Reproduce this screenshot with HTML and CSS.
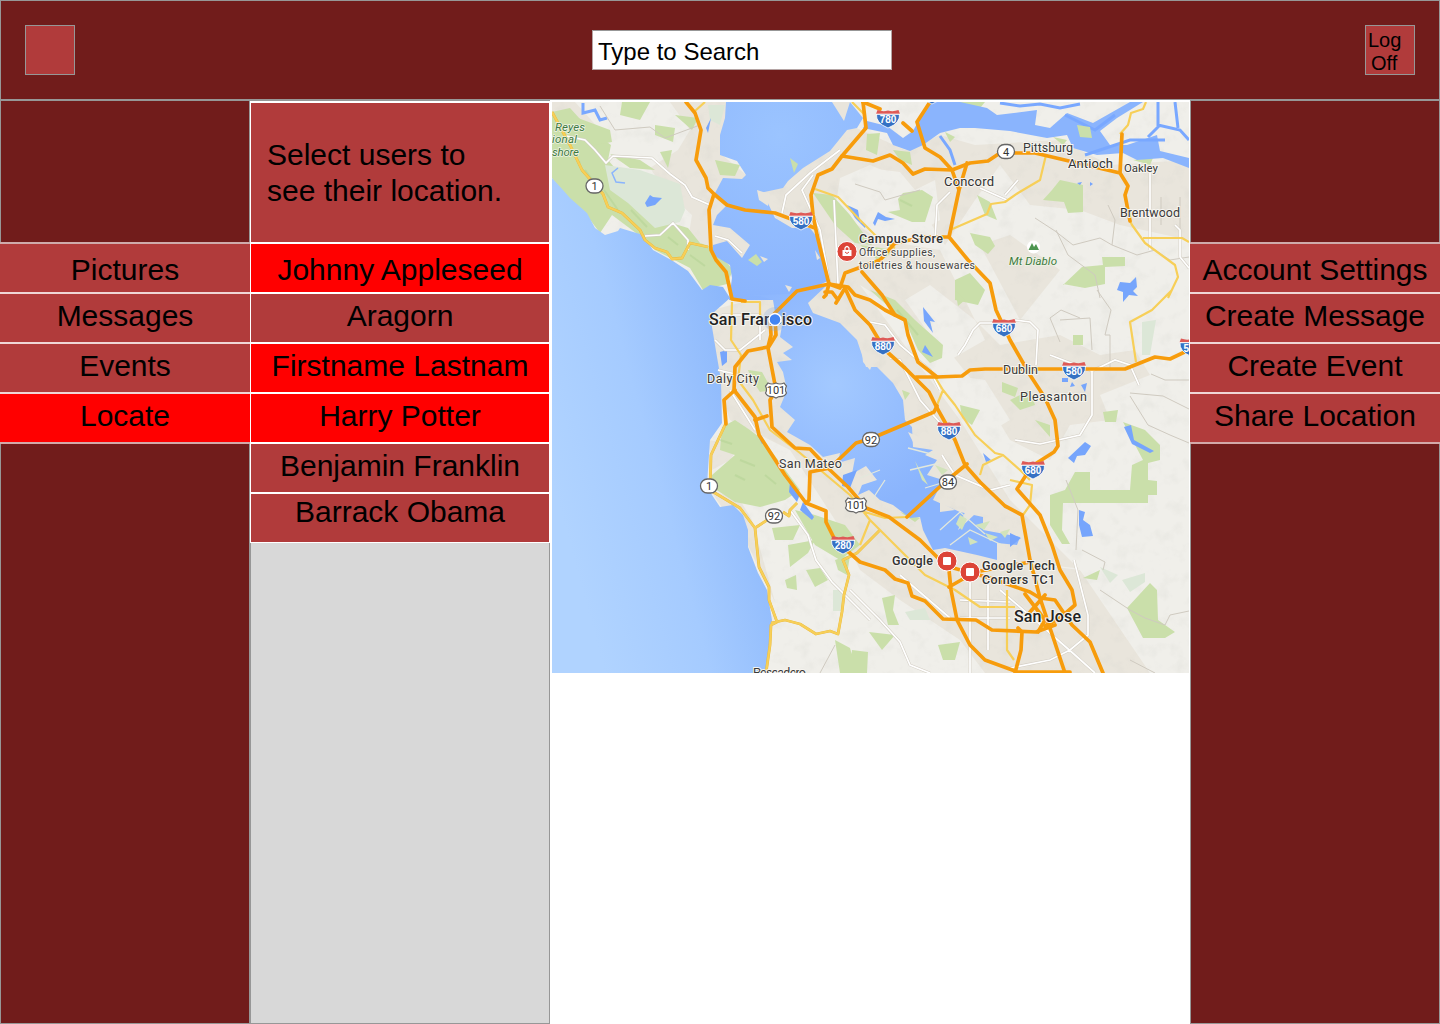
FILE: index.html
```html
<!DOCTYPE html>
<html lang="en">
<head>
<meta charset="utf-8">
<title>Locate</title>
<link rel="stylesheet" href="styles.css">
</head>
<body>
<header class="topbar">
  <button class="square" aria-label="Home"></button>
  <input class="search" type="text" value="Type to Search" aria-label="Search">
  <button class="square logoff"><span>Log</span><span class="off">Off</span></button>
</header>
<main class="columns">
  <nav class="panel side">
    <a class="row first">Pictures</a>
    <a class="row">Messages</a>
    <a class="row">Events</a>
    <a class="row active">Locate</a>
  </nav>
  <section class="panel users">
    <div class="card">
      <p class="prompt">Select users to<br>see their location.</p>
      <a class="row first active">Johnny Appleseed</a>
      <a class="row">Aragorn</a>
      <a class="row active">Firstname Lastnam</a>
      <a class="row active">Harry Potter</a>
      <a class="row">Benjamin Franklin</a>
      <a class="row last">Barrack Obama</a>
    </div>
  </section>
  <section class="map-area">
    <svg class="map" viewBox="552 102 637 571" width="637" height="571">
      <defs>
        <linearGradient id="sea" gradientUnits="userSpaceOnUse" x1="552" y1="480" x2="772" y2="420">
          <stop offset="0" stop-color="#b0d3ff"/><stop offset=".45" stop-color="#a5cbff"/><stop offset="1" stop-color="#89b5fb"/>
        </linearGradient>
        <radialGradient id="bay" gradientUnits="userSpaceOnUse" cx="835" cy="385" r="130">
          <stop offset="0" stop-color="#a3c9ff"/><stop offset="1" stop-color="#8ab4fd"/>
        </radialGradient>
        <radialGradient id="north" gradientUnits="userSpaceOnUse" cx="780" cy="135" r="170">
          <stop offset="0" stop-color="#9bc4ff"/><stop offset="1" stop-color="#8ab4fd"/>
        </radialGradient>
        <filter id="relief" x="0" y="0" width="100%" height="100%">
          <feTurbulence type="fractalNoise" baseFrequency=".07" numOctaves="3" seed="8"/>
          <feColorMatrix values="0 0 0 0 .6  0 0 0 0 .6  0 0 0 0 .56  1.6 0 0 0 -.8"/>
        </filter>
        <g id="interstate">
          <path d="M-11.500-5H11.500Q12.500 4 0 9Q-12.500 4-11.500-5Z" fill="#3571c4" stroke="#fff" stroke-width=".8"/>
          <path d="M-10.500-9Q-5-7 0-8.500Q5-7 10.500-9L12-5H-12Z" fill="#de5a57"/>
          <path d="M-12-4.800H12" stroke="#fff"/>
        </g>
        <rect id="oval" x="-8.500" y="-7" width="17" height="14" rx="7" fill="#fff" stroke="#666" stroke-width="1.300"/>
        <path id="us" d="M-8-7Q-4-5 0-7Q4-5 8-7L10.500-4Q8.500 0 10.500 3Q8.500 7 3 6.500L0 8L-3 6.500Q-8.500 7-10.500 3Q-8.500 0-10.500-4Z" fill="#fff" stroke="#666" stroke-width="1.200"/>
        <g id="pin"><circle r="10" fill="#dc4437" stroke="#fff" stroke-width="1"/></g>
      </defs>
      <rect x="552" y="102" width="637" height="571" fill="#f0efea"/>

      <!-- built-up areas -->
      <g fill="#e9e5dc">
        <path d="M670 102H735L722 155L750 178L720 190L756 250L735 262L712 252L688 240L692 215L665 190L650 168L678 150L690 130Z"/>
        <path d="M552 102H575L600 130L575 150L552 120Z"/>
        <path d="M760 190L800 165L850 125L905 150L940 135L975 145L1060 140L1110 165L1189 160V240L1120 225L1080 210L1030 205L1000 165L975 200L945 245L925 215L905 180L870 165L840 178L835 210L880 240L940 250L975 320L1000 345L1060 335L1100 355L1135 350L1150 375L1100 395L1110 420L1070 425L1050 460L1010 440L980 390L940 340L900 310L860 285L960 420L1010 500L1070 560L1110 600L1150 673H985L960 640L900 600L860 570L835 520L790 450L730 420L712 370L712 310L770 295L830 285L780 225Z"/>
        <path d="M708 440L740 445L730 460L712 470ZM710 490L740 500L752 520L775 602L764 580L748 545Z"/>
        <path d="M980 245L1010 235L1060 270L1020 320ZM1120 190H1189V210L1150 205Z"/>
      </g>
      <path fill="#f0efea" d="M848 190L868 168L900 172L915 190L935 180L940 220L905 240L875 235L850 210ZM905 300L930 285L975 320L985 340L950 360L930 335ZM1000 560L1189 580V673H1150L1080 570ZM950 375L985 380L1010 420L985 435Z"/>
      <rect x="552" y="102" width="637" height="571" filter="url(#relief)" opacity=".3"/>

      <!-- parks -->
      <g fill="#cadfaa">
        <path d="M552 112L570 108L590 130L611 145L608 160L625 180L645 205L668 222L688 228L700 243L715 248L733 270L727 284L703 290L690 268L655 250L640 236L612 215L600 233L585 213L565 196L552 178Z"/>
        <path d="M622 102H650L640 120L620 115ZM570 115L610 130L612 142L590 146ZM655 125L675 128L673 142L655 135ZM675 115L698 118L692 130ZM610 154L640 160L655 170L630 168ZM660 152L672 150L668 168ZM715 160L740 165L735 176L720 175ZM748 260L758 255L762 262L755 266Z"/>
        <path d="M790 158L800 165L795 174L790 170ZM867 134L880 133L877 155L866 150ZM893 150L910 152L912 165L900 160ZM813 193L832 195L850 215L872 245L855 243L835 225ZM898 199L903 193L922 190L933 197L925 222L912 222L888 212L900 210ZM860 245L895 250L880 262ZM945 132L955 137L950 142Z"/>
        <path d="M1043 200L1052 190L1060 180L1083 185L1083 212L1068 213L1064 202ZM1063 285L1082 267L1103 265L1102 257H1125V266L1105 267L1105 284L1085 288L1063 284ZM977 195L990 202L997 220L985 215ZM970 233L990 237L995 246L988 254L975 245ZM955 280L970 273L985 290L978 305L955 300ZM1073 125L1092 128L1080 137ZM1053 137L1067 140L1063 145ZM1133 160L1153 158L1150 165Z"/>
        <path d="M870 290L895 300L915 320L943 345L942 358L930 363L918 350L907 325L890 308ZM748 370L762 372L772 390L760 392L752 380ZM722 427L735 420L750 430L763 440L778 460L800 490L785 500L760 507L735 502L712 487L712 475L735 455L720 450Z"/>
        <path d="M1073 335H1083V345H1073ZM1010 400L1030 390L1035 405L1020 410ZM1035 420L1050 425L1050 437ZM1103 412L1118 410L1116 422L1105 422ZM1123 422L1145 430L1160 445V460L1148 463V480L1157 481V495H1148V503H1115L1063 503L1062 530L1070 544H1062L1050 525L1050 495L1065 490L1075 472H1090V490H1130L1132 465L1143 460ZM960 405L980 410L972 425L962 418ZM1002 382L1018 388L1015 397L1002 392ZM955 290L965 300L958 306Z"/>
        <path d="M772 528L800 525L793 540H775ZM788 545L815 540L808 553L790 567ZM806 570L820 568L828 580L815 587ZM795 510L815 515L845 525L860 545L840 560L815 545ZM785 580L796 575L797 590L787 588ZM835 560L850 555L847 575L838 570ZM835 640L850 648L857 673H840ZM852 650L868 652L867 673H850ZM882 598L895 595L893 610L899 625L888 625ZM938 645L960 642L955 660H943ZM869 632L895 635L882 650ZM552 673"/>
        <path d="M1127 608L1150 583L1157 590L1158 620L1175 632L1165 638L1143 638ZM1083 578L1100 570L1097 580ZM900 512L920 518L915 522ZM902 390L910 393L905 400ZM955 102H985L980 108Z"/>
      </g>
      <g fill="#dce7d7">
        <path d="M605 165L640 170L680 184L685 210L680 222L655 228L628 203L610 190ZM1122 580L1145 573L1145 582L1130 592ZM1142 322L1156 320L1150 355H1142ZM833 590H842V611H833ZM708 105H725L720 125L710 120ZM905 612L925 608L930 620L910 620ZM1100 567L1118 575L1110 583Z"/>
      </g>
      <g fill="none" stroke="#b6d496" stroke-width="2" opacity=".6"><path d="M570 150L580 163M585 170L594 182M604 190L618 210M631 210L647 227M668 237L678 245M690 255L705 266M720 440L732 444M740 460L755 466M735 475L745 480M765 475L776 484M900 200L912 206M897 310L918 335"/></g>

      <!-- water -->
      <path fill="url(#sea)" d="M552 178L563 190L570 198L587 213L595 228L605 235L618 231L620 228L643 235L653 250L673 261L688 271L702 290L710 285L723 287L730 298L713 313L712 327L717 357L721 380L722 423L710 440L707 485L712 495L720 507L733 505L743 515L748 530V547L758 573L767 590L772 620L770 640L766 673H552Z"/>
      <path fill="url(#north)" d="M726 102L725 118L720 135V155L737 161L746 175L742 179L723 178L715 193L727 205L717 215L713 225L730 228L750 245L742 258L727 241L713 245V255L730 265L732 278L729 300H775L790 298L828 281L823 258L820 241L810 228H792L775 218L767 201L760 193L783 188L788 181L803 168L830 151L847 130L857 128L863 118L850 102Z"/>
      <path fill="url(#bay)" d="M728 296L760 296L773 300L775 312L783 320L780 337L793 347L783 353L792 360L777 362L783 372L787 390L780 407L795 420L787 432L810 445L823 457L840 453L838 463L855 458L852 474L866 466L877 480L862 485L858 495L869 490L880 500L893 505L910 518L920 517L923 530L933 550L945 548L977 555L997 560V543L1017 545L1020 537L983 530V517L960 512L933 500L943 480L927 475L937 460L925 455L933 450L913 447L912 427L905 420L903 400L893 383L877 367L866 367L857 340L840 323L813 313L808 303L826 286L790 294Z"/>
      <path fill="#8ab4fd" d="M863 128L887 133L893 145L910 151L923 145L940 133L960 128H975L1010 131L1047 138L1067 135L1073 148L1097 155L1123 153L1137 160L1163 158L1189 168V158L1160 151L1157 135L1127 145H1110L1100 131L1117 118L1143 102H1130L1093 123L1067 113L1050 128L1035 125L1037 110L997 115L987 108L960 102H930L920 118L913 131L903 138L887 126L867 121Z"/>
      <g fill="none" stroke="#79a8ff" stroke-width="3"><path d="M1000 103L1020 106L1040 104L1060 108L1080 104M1065 115L1095 130L1115 115M1158 102V125L1180 130L1189 140M1160 125L1148 137M1175 102L1178 128M1085 155L1130 140L1165 140M940 136L950 150L955 165M583 103V113L595 110L600 120L607 118"/></g>
      <g fill="#e9e5dc"><path d="M760 256L768 259L764 262ZM832 102H850L844 121ZM757 190L770 194L768 206L759 200ZM815 250L820 258L817 260ZM785 285L792 287L789 292ZM862 352L875 358L870 370L863 362Z"/></g>
      <g fill="#cadfaa"><path d="M1077 125L1090 127L1092 138L1080 137ZM748 260L756 254L762 262L757 266ZM790 158L798 164L794 173Z"/></g>
      <g fill="#76a5fc">
        <path d="M847 205L858 210L860 222L866 225L865 228L855 218ZM873 223L878 212L886 217L895 219L885 221L878 219L875 226ZM1120 282L1130 283L1136 277L1137 287L1133 291L1138 296L1129 295L1123 302L1123 292L1117 290ZM1124 427L1131 425L1134 440L1154 451L1150 453L1132 444ZM1068 458L1085 442L1091 446L1085 455L1077 456L1074 463ZM1079 510L1085 512L1083 520L1090 525L1093 536L1082 537L1079 525ZM1062 378H1068V382H1062ZM1072 382L1075 386L1070 387ZM1081 385L1087 383L1085 392ZM645 203L650 195L653 197L662 198L655 205L647 207ZM720 352L727 350V362L722 366ZM757 434L765 442L762 444ZM790 482L800 494L797 502L789 492ZM803 502L814 517L812 520L800 510ZM923 307L935 322L930 321L933 333L924 321ZM925 345L933 357L922 352ZM983 453L991 460L986 462ZM843 475L857 470L850 488L842 486ZM1010 533L1021 538L1010 547ZM706 128L711 118L708 133ZM1077 183L1082 182L1080 185ZM1090 182L1093 184L1090 186Z"/>
        <path d="M618 168L612 173L616 182L625 183" fill="none" stroke="#8ab4fd" stroke-width="1.500"/>
      </g>
      <!-- salt ponds -->
      <g fill="#e9e5dc"><path d="M908 432L925 440L915 446ZM940 502L955 510L940 512ZM965 490L974 515L958 530L967 507Z"/></g>
      <g fill="#d2e3bb"><path d="M960 515L967 519L962 530L956 524ZM975 525L990 521L984 530ZM985 533L998 537L990 541ZM968 537L978 542L970 545ZM1000 532L1010 529L1005 538ZM915 461L928 485L922 480ZM935 465L948 470L942 475Z"/></g>
      <g fill="none" stroke="#e3e8dc" stroke-width="1.300"><path d="M908 448L935 455M910 470L940 463M925 488L945 482M940 530L960 512L985 534M950 545L970 530L1002 545M860 478L880 470M872 500L885 480"/></g>

      <!-- minor roads -->
      <path fill="none" stroke="#cfcac0" stroke-width="1" d="M1035 218L1055 231L1073 245L1100 238L1112 245L1137 255L1155 250L1170 260L1189 257M1112 245L1115 220L1108 205M1056 230L1068 255L1095 275L1100 298M855 184L880 192L885 200L920 190M1097 290L1111 310L1105 335L1110 335V368M1060 320L1090 318L1092 350M1060 342L1050 318L1061 310L1080 318M1130 393L1163 396L1189 409M1130 396L1148 425L1170 435L1189 443M1151 374L1165 380H1189M1082 550L1105 562L1103 570M1100 590L1130 610L1145 618L1165 625L1170 615L1189 611M600 106L615 130L650 127L665 138L700 125M1161 197V225M1180 197V232M1130 660L1155 673M1066 480L1078 510L1076 550M820 673L835 645"/>
      <path fill="none" stroke="#d3cec4" stroke-width="2.800" d="M566 136L585 140L595 150L606 163L613 156L652 158L670 174L685 185L692 197L710 205M645 236L660 235L673 223L688 240V250M715 236L728 240L742 253M782 213L786 195L810 173L840 150M813 175L802 190L820 230L830 285M834 200L838 284M870 322L885 325L900 345L930 370L940 390M890 358L900 360L920 400L955 440M958 355L965 345L973 330L980 323H995M1015 320L1030 322L1038 330L1036 365M1050 355L1092 371L1115 360L1130 365L1139 385M1092 371V415L1080 435L1040 444L1015 440M790 510L808 535L816 560L832 582L850 600L870 620M850 590L880 620L900 642L910 665L930 673M970 575V673M988 580V650M960 600L1010 602M960 618H1010M900 575L950 618M942 455L945 460L955 475L990 490L1010 485M1000 590L1035 620L1075 655L1095 673M1074 560L1088 615V635L1070 650L1050 660L1010 668M722 315H760L760 340M715 340L725 350H740L765 330M718 370L740 375M730 390L755 430M1018 180L1005 195M980 188L1007 200M935 240L937 205L950 192M1150 173V250M1175 225L1180 230V257L1189 268"/>
      <path fill="none" stroke="#fff" stroke-width="1.700" d="M566 136L585 140L595 150L606 163L613 156L652 158L670 174L685 185L692 197L710 205M645 236L660 235L673 223L688 240V250M715 236L728 240L742 253M782 213L786 195L810 173L840 150M813 175L802 190L820 230L830 285M834 200L838 284M870 322L885 325L900 345L930 370L940 390M890 358L900 360L920 400L955 440M958 355L965 345L973 330L980 323H995M1015 320L1030 322L1038 330L1036 365M1050 355L1092 371L1115 360L1130 365L1139 385M1092 371V415L1080 435L1040 444L1015 440M790 510L808 535L816 560L832 582L850 600L870 620M850 590L880 620L900 642L910 665L930 673M970 575V673M988 580V650M960 600L1010 602M960 618H1010M900 575L950 618M942 455L945 460L955 475L990 490L1010 485M1000 590L1035 620L1075 655L1095 673M1074 560L1088 615V635L1070 650L1050 660L1010 668M722 315H760L760 340M715 340L725 350H740L765 330M718 370L740 375M730 390L755 430M1018 180L1005 195M980 188L1007 200M935 240L937 205L950 192M1150 173V250M1175 225L1180 230V257L1189 268"/>

      <!-- arterial roads -->
      <path fill="none" stroke="#e8b73a" stroke-width="2.800" stroke-linejoin="round" d="M552 112L570 145L582 170L603 194L608 207L622 213L640 230L645 240L655 248L667 252L672 259L682 258L690 243L708 247M726 423L711 455L710 490L740 508L755 528L759 567L769 587V600L777 622L771 625L770 645L766 673M771 623L785 620L800 624L816 634L830 631L838 634L842 612L844 595L849 575L843 560L857 553L880 530M755 528L775 515M783 512L789 516L790 510L797 503"/>
      <path fill="none" stroke="#f7cf58" stroke-width="2.200" stroke-linejoin="round" d="M552 112L570 145L582 170L603 194L608 207L622 213L640 230L645 240L655 248L667 252L672 259L682 258L690 243L708 247M726 423L711 455L710 490L740 508L755 528L759 567L769 587V600L777 622L771 625L770 645L766 673M771 623L785 620L800 624L816 634L830 631L838 634L842 612L844 595L849 575L843 560L857 553L880 530M755 528L775 515M783 512L789 516L790 510L797 503M732 302L731 340L741 355L738 380L753 400L770 430L800 453L850 495L870 520L895 545L925 575L955 590L980 607H1015M815 189L838 197L860 220L880 240L895 248M950 230L987 214L991 204L1005 202L1018 193L1040 180L1046 155M1146 102L1143 109L1131 113L1128 125L1120 134M1130 221L1132 225L1145 243L1175 265L1178 277L1168 298M1143 238H1182L1189 242M1172 290L1152 310L1130 322L1136 362M935 377L943 390L955 405L975 435L995 453L1003 455L1020 470L1030 480M980 475L983 465L1003 455M943 390L937 405M858 510L885 518L907 517M870 520L860 545M1007 590V650L1014 660M1010 480L1032 485L1030 505L1023 515M1003 578L1023 580M852 102L865 115M695 111L705 102M741 302H760V320"/>

      <!-- freeways -->
      <g fill="none" stroke="#f79c0c" stroke-width="3.700" stroke-linejoin="round" stroke-linecap="round">
        <path d="M686 102L695 113L701 130L696 160L706 178L708 188L714 194L709 210L711 250L716 260L726 272L732 299L745 301M714 194L727 205L745 210L775 213L815 228"/>
        <path d="M863 102L866 128L842 156L832 169L818 175L811 195L813 215L817 235L829 284L797 291L770 318L771 335L768 347L748 351L735 367L734 390L755 417L759 435L785 475L806 503L826 511V522L835 540L860 562L885 570L895 579L908 583L912 596L925 601L943 619L976 620L992 630L1036 632L1055 625"/>
        <path d="M863 102L880 109M930 102L917 122L925 148L940 157L952 170M903 123L912 131M917 122L921 135"/>
        <path d="M842 156L873 161L890 155L903 163L913 174L925 169L952 170L970 163L988 161L1000 153L1035 153L1120 173L1122 134M1120 173L1128 186L1125 195L1130 221M967 163L959 190L949 237H925L895 243L880 260L845 273L840 288L829 284M952 170L959 190"/>
        <path d="M949 237L968 260L990 283L996 310L1010 340L1030 375L1045 398L1055 420L1058 446L1054 452L1032 466L1017 489L1040 515L1052 545L1060 570L1072 590L1075 605L1060 618L1045 626"/>
        <path d="M829 284L848 287L855 295L870 300L885 310L905 320L908 335L918 362L937 377L962 376L970 370L985 369H1125L1155 357L1170 359L1189 350"/>
        <path d="M862 272L882 295L895 315M829 284L826 295L824 297M836 303L845 288L855 310L870 325L885 350L905 368L929 392L937 408L955 440L965 465L980 482L1005 506L1022 515L1030 560L1040 598L1065 673M838 300L832 292L825 292M916 377L937 377"/>
        <path d="M775 318L776 335L768 348L776 390L770 400L772 427L795 448L810 449L830 470L848 487L866 508L889 517L920 540L946 566L990 578L1030 592L1040 598L1055 600L1072 625L1090 642L1103 673"/>
        <path d="M735 390L724 400L726 424M755 420L767 416M810 472L809 500L806 503M810 472L830 468L856 443L870 439L934 412L937 406M907 517L945 482L967 464M949 570L951 590L957 620L970 645L985 660L1015 671M949 587L975 572L1030 562M1018 628L1022 632L1021 650L1015 673M1025 594L1045 620L1038 632M1045 595L1030 612M1015 672H1070"/>
      </g>

      <!-- route shields -->
      <g class="shield-text">
        <g transform="translate(888 119)"><use href="#interstate"/><text y="4">780</text></g>
        <g transform="translate(801 221)"><use href="#interstate"/><text y="4">580</text></g>
        <g transform="translate(883 346)"><use href="#interstate"/><text y="4">880</text></g>
        <g transform="translate(1004 328)"><use href="#interstate"/><text y="4">680</text></g>
        <g transform="translate(1074 371)"><use href="#interstate"/><text y="4">580</text></g>
        <g transform="translate(949 431)"><use href="#interstate"/><text y="4">880</text></g>
        <g transform="translate(1033 470)"><use href="#interstate"/><text y="4">680</text></g>
        <g transform="translate(843 545)"><use href="#interstate"/><text y="4">280</text></g>
        <g transform="translate(1191.500 347.500)"><use href="#interstate"/><text x="-8" y="4" style="text-anchor:start">5</text></g>
        <g transform="translate(932 95)"><use href="#interstate"/></g>
      </g>
      <g class="route-text">
        <g transform="translate(594.500 186)"><use href="#oval"/><text y="4">1</text></g>
        <g transform="translate(1006 151.500)"><use href="#oval"/><text y="4">4</text></g>
        <g transform="translate(709 486)"><use href="#oval"/><text y="4">1</text></g>
        <g transform="translate(774 516)"><use href="#oval"/><text y="4">92</text></g>
        <g transform="translate(871 439.500)"><use href="#oval"/><text y="4">92</text></g>
        <g transform="translate(948 482)"><use href="#oval"/><text y="4">84</text></g>
        <g transform="translate(776 390)"><use href="#us"/><text y="4">101</text></g>
        <g transform="translate(856 505)"><use href="#us"/><text y="4">101</text></g>
      </g>

      <!-- place names -->
      <g class="park-name">
        <text x="555" y="131" textLength="30">Reyes</text><text x="552" y="143" textLength="25">ional</text><text x="552" y="156" textLength="27">shore</text>
        <text x="1009" y="265" textLength="48">Mt Diablo</text>
      </g>
      <g class="town">
        <text x="1023" y="152" textLength="50">Pittsburg</text>
        <text class="mid" x="1068" y="168" textLength="45">Antioch</text>
        <text class="small" x="1124" y="172" textLength="34">Oakley</text>
        <text class="mid" x="944" y="186" textLength="50">Concord</text>
        <text x="1120" y="217" textLength="60">Brentwood</text>
        <text x="707" y="383" textLength="52">Daly City</text>
        <text x="1003" y="374" textLength="35">Dublin</text>
        <text x="1020" y="401" textLength="67">Pleasanton</text>
        <text x="779" y="468" textLength="63">San Mateo</text>
        <text x="753" y="677" textLength="53">Pescadero</text>
      </g>
      <g class="city"><text x="709" y="325" textLength="103">San Francisco</text><text x="1014" y="622" textLength="67">San Jose</text></g>
      <g class="poi">
        <text x="859" y="243" textLength="84">Campus Store</text>
        <text x="892" y="565" textLength="41">Google</text>
        <text x="982" y="570" textLength="73">Google Tech</text>
        <text x="982" y="584" textLength="73">Corners TC1</text>
      </g>
      <g class="poi-note"><text x="859" y="256" textLength="76">Office supplies,</text><text x="859" y="269" textLength="116">toiletries &amp; housewares</text></g>

      <!-- markers -->
      <circle cx="1033.500" cy="247" r="6.500" fill="#fff"/><path d="M1028.500 250L1032 243L1034 247L1036 244L1039 250Z" fill="#4d9550"/>
      <circle cx="775" cy="319" r="12" fill="#6c9ee8" opacity=".22"/>
      <circle cx="775" cy="319.500" r="6" fill="#4285f4" stroke="#fff" stroke-width="1.500"/>
      <use href="#pin" x="847" y="251.500"/>
      <path d="M842.500 250H851.500V256H842.500Z" fill="#fff"/><path d="M845 250V248Q847 245 849 248V250" fill="none" stroke="#fff" stroke-width="1.300"/><path d="M845 252Q847 255 849 252" fill="none" stroke="#dc4437"/>
      <use href="#pin" x="947" y="561"/><rect x="943" y="557" width="8" height="8" rx="1" fill="#fff"/>
      <use href="#pin" x="970" y="572"/><rect x="966" y="568" width="8" height="8" rx="1" fill="#fff"/>
    </svg>
  </section>
  <nav class="panel side">
    <a class="row first">Account Settings</a>
    <a class="row">Create Message</a>
    <a class="row">Create Event</a>
    <a class="row">Share Location</a>
  </nav>
</main>
</body>
</html>
```
FILE: styles.css
```css
* { box-sizing: border-box; }
body {
  margin: 0;
  width: 1440px;
  height: 1024px;
  overflow: hidden;
  background: #fff;
  color: #000;
  font-family: "Liberation Sans", Arial, sans-serif;
}
.topbar {
  display: flex;
  align-items: center;
  height: 100px;
  padding: 0 24px;
  border: 1px solid #979797;
  background: #711c1b;
}
.square {
  width: 50px;
  height: 50px;
  padding: 0;
  border: 1px solid #979797;
  background: #b13b3b;
  font: 20px/23px "Liberation Sans", Arial, sans-serif;
  color: #000;
}
.logoff {
  display: flex;
  flex-direction: column;
  align-items: flex-start;
  margin-left: auto;
  padding: 3px 0 0 2px;
}
.off { padding-left: 3px; }
.search {
  width: 300px;
  height: 40px;
  margin-left: 517px;
  padding: 3px 5px 0;
  border: 1px solid #b5a5a5;
  border-top-color: #979797;
  border-radius: 0;
  background: #fff;
  color: #000;
  font: 24px/34px "Liberation Sans", Arial, sans-serif;
}
.columns { display: flex; height: 924px; }
.panel { border: 1px solid #979797; }
.side {
  width: 250px;
  padding-top: 141px;
  background: #711c1b;
}
.row {
  display: block;
  height: 50px;
  padding-top: 5px;
  border-top: 2px solid #fff;
  background: #b13b3b;
  font-size: 30px;
  line-height: 34px;
  text-align: center;
  white-space: nowrap;
}
.row.first { padding-top: 9px; }
.row.last { padding-top: 1px; }
.row.active { background: #f00; }
.side .row {
  margin: 0 -1px;
  border-top-color: #f0d6d6;
}
.side .row.first { border-top-color: #cfabab; }
.side .row:last-child {
  height: 52px;
  border-bottom: 2px solid #d3a9a9;
}
.users { width: 300px; background: #d8d8d8; }
.card {
  margin: 0 -1px;
  border: solid #fff;
  border-width: 0 1px 1px;
}
.prompt {
  height: 141px;
  margin: 0;
  padding: 34px 16px 0;
  border-top: 2px solid #fff;
  background: #b13b3b;
  font-size: 30px;
  line-height: 36px;
}
.map-area { width: 640px; padding: 2px 0 0 2px; }
.map { display: block; font-family: Roboto, sans-serif; }
.map text { paint-order: stroke; }
.shield-text { font: 700 10px "Liberation Sans", Arial, sans-serif; fill: #fff; text-anchor: middle; }
.route-text { font-size: 11px; fill: #333; text-anchor: middle; }
.town { font-size: 12.5px; fill: #3a3a3a; stroke: #f6f4ef; stroke-width: 2px; }
.town .mid { font-size: 13px; fill: #333; }
.town .small { font-size: 11.5px; }
.park-name { font-size: 11.5px; font-style: italic; fill: #3f7a42; stroke: #eef3e4; stroke-width: 1.5px; }
.city { font-size: 16px; font-weight: 500; fill: #222; stroke: #f6f4ef; stroke-width: 2px; }
.poi { font-size: 12.5px; font-weight: 500; fill: #333; stroke: #f6f4ef; stroke-width: 2px; }
.poi-note { font-size: 10.5px; fill: #444; stroke: #f6f4ef; stroke-width: 2px; }
```
